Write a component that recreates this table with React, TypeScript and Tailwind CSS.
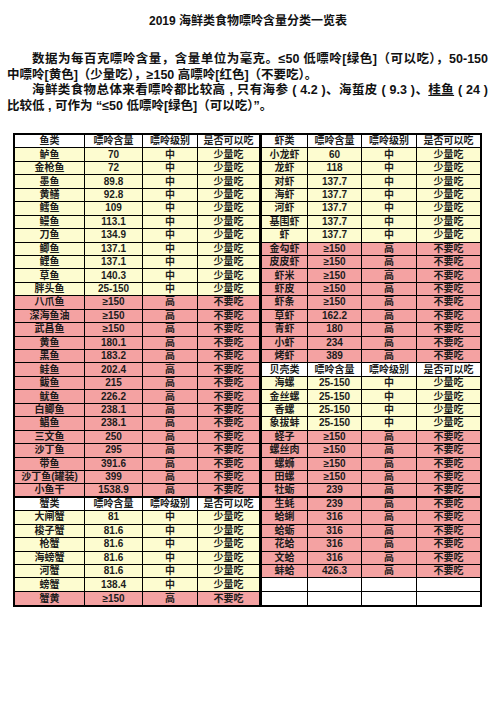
import React from 'react';

type Kind = 'h' | 'y' | 'r' | 'w';

interface Row {
  kind: Kind;
  cells: string[];
}

const head = (name: string): Row => ({ kind: 'h', cells: [name, '嘌呤含量', '嘌呤级别', '是否可以吃'] });
const mid = (name: string, v: string): Row => ({ kind: 'y', cells: [name, v, '中', '少量吃'] });
const high = (name: string, v: string): Row => ({ kind: 'r', cells: [name, v, '高', '不要吃'] });
const empty = (): Row => ({ kind: 'w', cells: ['', '', '', ''] });

const leftRows: Row[] = [
  head('鱼类'),
  mid('鲈鱼', '70'),
  mid('金枪鱼', '72'),
  mid('墨鱼', '89.8'),
  mid('黄鳝', '92.8'),
  mid('鳕鱼', '109'),
  mid('鳗鱼', '113.1'),
  mid('刀鱼', '134.9'),
  mid('鲫鱼', '137.1'),
  mid('鲤鱼', '137.1'),
  mid('草鱼', '140.3'),
  mid('胖头鱼', '25-150'),
  high('八爪鱼', '≥150'),
  high('深海鱼油', '≥150'),
  high('武昌鱼', '≥150'),
  high('黄鱼', '180.1'),
  high('黑鱼', '183.2'),
  high('鲑鱼', '202.4'),
  high('鲅鱼', '215'),
  high('鱿鱼', '226.2'),
  high('白鲫鱼', '238.1'),
  high('鲳鱼', '238.1'),
  high('三文鱼', '250'),
  high('沙丁鱼', '295'),
  high('带鱼', '391.6'),
  high('沙丁鱼(罐装)', '399'),
  high('小鱼干', '1538.9'),
  head('蟹类'),
  mid('大闸蟹', '81'),
  mid('梭子蟹', '81.6'),
  mid('枪蟹', '81.6'),
  mid('海螃蟹', '81.6'),
  mid('河蟹', '81.6'),
  mid('螃蟹', '138.4'),
  high('蟹黄', '≥150'),
];

const rightRows: Row[] = [
  head('虾类'),
  mid('小龙虾', '60'),
  mid('龙虾', '118'),
  mid('对虾', '137.7'),
  mid('海虾', '137.7'),
  mid('河虾', '137.7'),
  mid('基围虾', '137.7'),
  mid('虾', '137.7'),
  high('金勾虾', '≥150'),
  high('皮皮虾', '≥150'),
  high('虾米', '≥150'),
  high('虾皮', '≥150'),
  high('虾条', '≥150'),
  high('草虾', '162.2'),
  high('青虾', '180'),
  high('小虾', '234'),
  high('烤虾', '389'),
  head('贝壳类'),
  mid('海螺', '25-150'),
  mid('金丝螺', '25-150'),
  mid('香螺', '25-150'),
  mid('象拔蚌', '25-150'),
  high('蛏子', '≥150'),
  high('螺丝肉', '≥150'),
  high('螺蛳', '≥150'),
  high('田螺', '≥150'),
  high('牡蛎', '239'),
  high('生蚝', '239'),
  high('蛤蜊', '316'),
  high('蛤蛎', '316'),
  high('花蛤', '316'),
  high('文蛤', '316'),
  high('蚌蛤', '426.3'),
  empty(),
  empty(),
];

const bg: Record<Kind, string> = {
  h: 'bg-white',
  y: 'bg-[#fdfcd0]',
  r: 'bg-[#f4a2a2]',
  w: 'bg-white',
};

const font = { fontFamily: '"Liberation Sans", "Noto Sans CJK SC", sans-serif' };

const Table: React.FC<{ rows: Row[]; cols: string; outer: string }> = ({ rows, cols, outer }) => (
  <div className={`border-black ${outer}`}>
    {rows.map((row, i) => (
      <div
        key={i}
        className={`grid ${cols} h-[13.45px] ${bg[row.kind]} ${
          i === 26 ? 'border-b-[2.5px]' : i === rows.length - 1 ? '' : 'border-b'
        } border-black`}
      >
        {row.cells.map((c, j) => (
          <div
            key={j}
            className={`flex items-center justify-center text-[10px] font-bold leading-none text-[#1c1c1c] whitespace-nowrap ${
              j < 3 ? 'border-r border-black' : ''
            }`}
          >
            {c}
          </div>
        ))}
      </div>
    ))}
  </div>
);

const App: React.FC = () => {
  return (
    <div className="w-[496px] h-[702px] bg-white text-[#111]" style={font}>
      <h1 className="pt-[13px] text-center text-[12px] leading-[16px] font-bold">
        2019 海鲜类食物嘌呤含量分类一览表
      </h1>

      {/* 说明文字 */}
      <div className="mt-[23px] pl-[7px] pr-[8px] text-[12.5px] leading-[15.5px] font-bold">
        <p className="pl-[25px] whitespace-nowrap text-justify [text-align-last:justify]">
          数据为每百克嘌呤含量，含量单位为毫克。≤50 低嘌呤[绿色]（可以吃），50-150
        </p>
        <p className="whitespace-nowrap">中嘌呤[黄色]（少量吃），≥150 高嘌呤[红色]（不要吃）。</p>
        <p className="pl-[25px] whitespace-nowrap text-justify [text-align-last:justify]">
          海鲜类食物总体来看嘌呤都比较高 , 只有海参 ( 4.2 )、海蜇皮 ( 9.3 )、<span className="underline">桂鱼</span> ( 24 )
        </p>
        <p className="whitespace-nowrap">比较低 , 可作为 “≤50 低嘌呤[绿色]（可以吃）”。</p>
      </div>

      {/* 表格 */}
      <div className="mt-[19px] ml-[13px] flex">
        <Table
          rows={leftRows}
          cols="grid-cols-[70px_58px_55px_61px]"
          outer="border-l-2 border-t-2 border-b-2 border-r"
        />
        <Table rows={rightRows} cols="grid-cols-[46px_54px_55px_63px]" outer="border-2" />
      </div>
    </div>
  );
};

export default App;
